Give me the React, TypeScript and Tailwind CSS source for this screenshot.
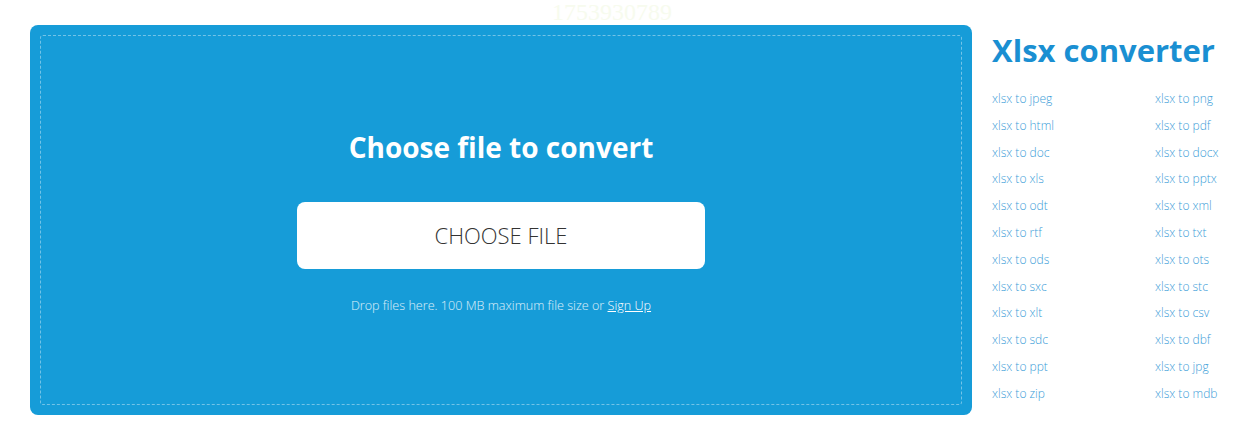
import React from 'react';

const links: [string, string][] = [
  ['jpeg', 'png'],
  ['html', 'pdf'],
  ['doc', 'docx'],
  ['xls', 'pptx'],
  ['odt', 'xml'],
  ['rtf', 'txt'],
  ['ods', 'ots'],
  ['sxc', 'stc'],
  ['xlt', 'csv'],
  ['sdc', 'dbf'],
  ['ppt', 'jpg'],
  ['zip', 'mdb'],
];

const App: React.FC = () => {
  return (
    <div className="w-[1242px] h-[438px] bg-white font-['Open_Sans',sans-serif] overflow-hidden">
      <div className="h-[25px] pl-[552px] text-[24px] leading-[24px] text-[#f7fbee] font-['Liberation_Serif',serif]">1753930789</div>
      <div className="flex pl-[30px] gap-[20px]">
        <div className="w-[942px] h-[390px] bg-[#169cd8] rounded-[8px] p-[10px]">
          <div className="h-full border border-dashed border-white/40 rounded-[3px] flex flex-col items-center">
            <h1 className="mt-[93px] text-[28px] leading-[36px] font-bold text-white">Choose file to convert</h1>
            <button className="mt-[37px] w-[408px] h-[67px] bg-white rounded-[8px] text-[22px] font-light text-[#333]">
              CHOOSE FILE
            </button>
            <p className="mt-[28px] text-[12.6px] font-light text-white/85">
              Drop files here. 100 MB maximum file size or <a className="underline text-white">Sign Up</a>
            </p>
          </div>
        </div>
        <div className="w-[250px]">
          <h2 className="mt-[4px] text-[31px] leading-[42px] font-bold text-[#1a8fd2]">Xlsx converter</h2>
          <div className="mt-[19px] grid grid-cols-[163px_1fr]">
            {links.map(([a, b]) => (
              <React.Fragment key={a}>
                <a className="h-[26.8px] text-[12px] font-light text-[#3b9dd8]">xlsx to {a}</a>
                <a className="h-[26.8px] text-[12px] font-light text-[#3b9dd8]">xlsx to {b}</a>
              </React.Fragment>
            ))}
          </div>
        </div>
      </div>
    </div>
  );
};

export default App;
